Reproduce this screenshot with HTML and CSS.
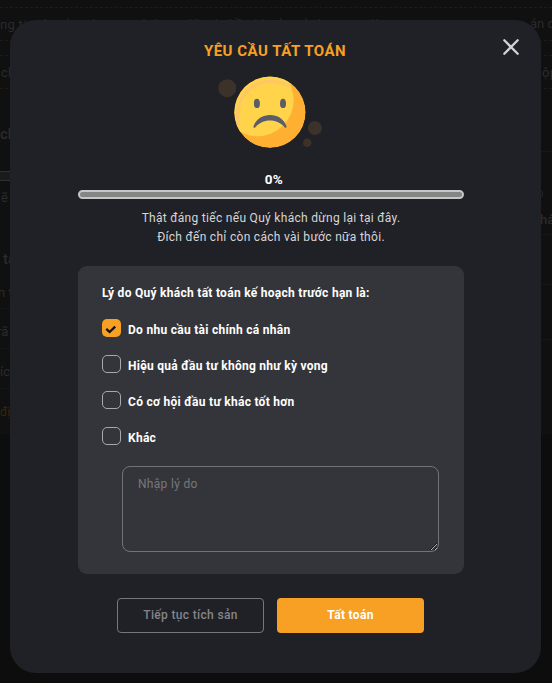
FILE: index.html
```html
<!DOCTYPE html>
<html lang="vi">
<head>
<meta charset="utf-8">
<title>Yêu cầu tất toán</title>
<link rel="stylesheet" href="styles.css">
</head>
<body>
<div class="page" aria-hidden="true">
  <div class="notice">ng tin tài sản, chương trình ưu đãi và điều khoản sử dụng, vui lòng</div>
  <div class="gap"></div>
  <div class="notice split"><span>ch</span><span>ộp</span></div>
  <div class="columns">
    <div class="col">
      <div class="line big h1">ch</div>
      <div class="track"></div>
      <div class="line h2">ẽ</div>
      <div class="line big h3">tạ</div>
      <div class="line h4">n t</div>
      <div class="line rule shifted">rã</div>
      <div class="line rule">íc</div>
      <div class="line rule link">đị</div>
    </div>
    <div class="col right">
      <div class="cell c1"></div>
      <div class="cell c2"><span class="dot"></span><b>há</b></div>
      <div class="cell c3"></div>
      <div class="cell c4"></div>
      <div class="cell c5"></div>
    </div>
  </div>
  <span class="notice-end">án d</span>
</div>

<div class="modal" role="dialog">
  <button class="close" aria-label="Đóng">
    <svg width="16" height="16" viewBox="0 0 16 16"><path d="M1.300 1.300 14.700 14.700M14.700 1.300 1.300 14.700" stroke="#d2d2d3" stroke-width="2.300" stroke-linecap="round"/></svg>
  </button>
  <h1 class="title">YÊU CẦU TẤT TOÁN</h1>
  <svg class="face" width="140" height="95" viewBox="0 0 140 95">
    <defs><clipPath id="head"><circle cx="70" cy="47.3" r="35.7"/></clipPath></defs>
    <g fill="#3c322a"><circle cx="27.3" cy="23.2" r="9"/><circle cx="114.9" cy="63" r="7"/><circle cx="107.2" cy="77.7" r="4.3"/></g>
    <g clip-path="url(#head)">
      <circle cx="70" cy="47.3" r="35.7" fill="#ffb033"/>
      <circle cx="57.500" cy="35" r="36.200" fill="#ffd44b"/>
      <path d="M38.500 59C34 36 49 16.500 70 16.500c7 0 12 1 18 4" fill="none" stroke="#ffc763" stroke-width="3.400" stroke-linecap="round"/>
    </g>
    <g fill="#5b5d68"><ellipse cx="56.9" cy="38.4" rx="3" ry="4.7"/><ellipse cx="83" cy="38.4" rx="3" ry="4.7"/>
    <path d="M53.500 61.200C56.300 54 62.500 50.100 70 50.100s13.700 3.900 16.500 11.100c.4 1.500-.9 2-1.900 1C80.500 58 76.200 55.600 70 55.600S59.500 58 55.400 62.200c-1 1-2.300.5-1.900-1Z"/></g>
  </svg>
  <div class="percent">0%</div>
  <div class="progress"></div>
  <p class="message">Thật đáng tiếc nếu Quý khách dừng lại tại đây.<br>Đích đến chỉ còn cách vài bước nữa thôi.</p>
  <form class="reasons">
    <h2 class="question">Lý do Quý khách tất toán kế hoạch trước hạn là:</h2>
    <label class="option"><span class="box checked"><svg width="12" height="10" viewBox="0 0 12 10"><path d="M1.300 4.800 4.600 8 10.200 2.600" fill="none" stroke="#111" stroke-width="2.300"/></svg></span><span>Do nhu cầu tài chính cá nhân</span></label>
    <label class="option"><span class="box"></span><span>Hiệu quả đầu tư không như kỳ vọng</span></label>
    <label class="option"><span class="box"></span><span>Có cơ hội đầu tư khác tốt hơn</span></label>
    <label class="option"><span class="box"></span><span>Khác</span></label>
    <textarea class="other" placeholder="Nhập lý do"></textarea>
  </form>
  <div class="actions">
    <button class="btn outline">Tiếp tục tích sản</button>
    <button class="btn primary">Tất toán</button>
  </div>
</div>
</body>
</html>
```
FILE: styles.css
```css
* { box-sizing: border-box; }
body { margin: 0; height: 683px; overflow: hidden; background: #0d0d0d; font-family: Roboto, "Noto Sans", sans-serif; }
button { font-family: inherit; padding: 0; }

.page { position: relative; padding-top: 7px; height: 434px; background: #101010; color: #2b2b2c; font-size: 13px; }
.notice { height: 34px; line-height: 33px; border: 1px dashed #211c13; border-width: 1px 0; overflow: hidden; white-space: nowrap; letter-spacing: .3px; }
.notice-end { position: absolute; top: 16px; left: 530px; white-space: nowrap; }
.gap { height: 14px; }
.split { display: flex; justify-content: space-between; padding: 0 0 0 1px; }
.split span:last-child { width: 10px; }
.columns { display: flex; justify-content: space-between; }
.col { width: 11px; overflow: hidden; white-space: nowrap; }
.col.right { width: 12px; }
.line { height: 40px; line-height: 46px; }
.line.big { font-size: 15px; font-weight: 500; }
.line.h1 { height: 82px; line-height: 90px; }
.track { height: 10px; background: #1b1b1b; border: 1px solid #303030; border-width: 1px 0; }
.line.h2 { height: 49px; line-height: 34px; padding-left: 1px; }
.line.h3 { height: 40px; line-height: 58px; padding-left: 3px; }
.line.h4 { height: 38px; line-height: 46px; margin-left: -2px; }
.rule { border-top: 1px solid #151515; }
.shifted { text-indent: -3px; }
.link { color: #3b240b; font-size: 12px; }
.cell { border-bottom: 1px solid #161616; }
.c1 { height: 63px; }
.c2 { height: 83px; padding-top: 37px; line-height: 42px; }
.c2 b { display: block; color: #2b2b2c; font-weight: 500; }
.dot { display: block; width: 10px; height: 10px; margin-left: -7px; border: 1px solid #292929; border-radius: 50%; }
.c3 { height: 50px; }
.c4 { height: 55px; }
.c5 { border: 0; }

.modal {
  position: absolute; top: 19.5px; left: 10px; width: 531px; height: 653.5px;
  display: flex; flex-direction: column; align-items: center;
  padding-top: 21.5px; border-radius: 26px; background: #202127; color: #fff;
}
.close { position: absolute; top: 19.5px; right: 22px; width: 16px; height: 16px; border: 0; background: none; }
.close svg { display: block; }
.title { margin: 0 1px 0 0; height: 20px; line-height: 20px; font-size: 15px; font-weight: 700; letter-spacing: .5px; color: #f7a024; white-space: nowrap; }
.face { display: block; margin: 4px 11px 0 0; flex: none; }
.percent { margin: 10px 3px 0 0; height: 18px; line-height: 18px; font-size: 13.5px; font-weight: 700; letter-spacing: .3px; }
.progress { width: 386px; height: 9px; margin: 2px 9px 0 0; border: 2px solid #c4c6c7; border-radius: 5px; background: #858585; flex: none; }
.message { margin: 10px 9px 0 0; text-align: center; font-size: 12px; line-height: 19px; letter-spacing: .3px; color: #d6d6d7; white-space: nowrap; }
.reasons { width: 386px; height: 308px; margin: 19px 9px 0 0; padding: 18px 24px 0; border-radius: 9px; background: #34353a; flex: none; }
.question { margin: 0 0 17px; height: 18px; line-height: 18px; font-size: 12px; font-weight: 700; letter-spacing: .28px; white-space: nowrap; }
.option { display: flex; height: 18px; margin-bottom: 18px; gap: 7px; font-size: 12px; line-height: 22px; font-weight: 700; letter-spacing: .28px; white-space: nowrap; }
.box { width: 19px; height: 18px; border: 1px solid #a8a8aa; border-radius: 5px; flex: none; }
.box.checked { display: flex; align-items: center; justify-content: center; padding: 2px 1px 0 0; border: 0; background: #f7a024; }
.other { display: block; width: 317px; height: 86px; margin: 21px 0 0 20px; padding: 8px 15px; border: 1px solid #737376; border-radius: 8px; background: transparent; color: #fff; font: 12px/18px Roboto, sans-serif; letter-spacing: .3px; resize: both; outline: 0; }
.other::placeholder { color: #77777a; }
.actions { display: flex; gap: 13px; margin: 24px 10px 0 0; }
.btn { width: 147px; height: 35px; border-radius: 4px; font-size: 12px; font-weight: 500; line-height: 35px; letter-spacing: .33px; }
.outline { border: 1px solid #77777b; background: transparent; color: #858589; line-height: 33px; }
.primary { border: 0; background: #f7a024; color: #fff; font-weight: 700; }
```
